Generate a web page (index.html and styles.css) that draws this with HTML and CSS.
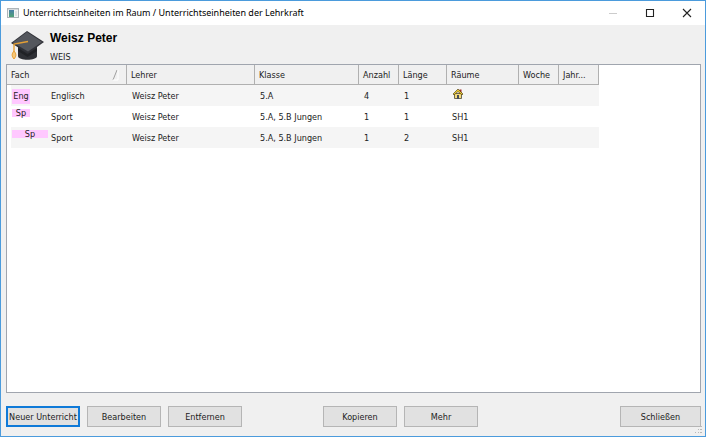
FILE: index.html
```html
<!DOCTYPE html>
<html lang="de">
<head>
<meta charset="utf-8">
<title>Unterrichtseinheiten</title>
<link rel="stylesheet" href="styles.css">
</head>
<body>
<div class="window">
  <header class="titlebar">
    <svg class="app-icon" width="12" height="12" viewBox="0 0 12 12" aria-hidden="true">
      <defs><linearGradient id="pane" x2="0" y2="1"><stop offset="0" stop-color="#4a7fa8"/><stop offset="1" stop-color="#4fa274"/></linearGradient></defs>
      <rect x=".5" y="1.5" width="11" height="9" fill="#f3f4f4" stroke="#aeb5b9"/>
      <path d="M1 2h10v1H1z" fill="#d5dadd"/>
      <rect x="2" y="3" width="5" height="7" fill="url(#pane)"/>
      <path d="M8 4h2v5H8z" fill="#dfe3e5"/>
    </svg>
    <span class="caption">Unterrichtseinheiten im Raum / Unterrichtseinheiten der Lehrkraft</span>
    <div class="controls">
      <button type="button" aria-label="Minimieren" disabled><svg width="10" height="10" viewBox="0 0 10 10"><path d="M1 5.5h8" stroke="#ccc"/></svg></button>
      <button type="button" aria-label="Maximieren"><svg width="10" height="10" viewBox="0 0 10 10"><path d="M1.5 1.500h7v7h-7z" fill="none" stroke="#222" stroke-width="1.1"/></svg></button>
      <button type="button" aria-label="Fenster schließen"><svg width="10" height="10" viewBox="0 0 10 10"><path d="M1 1l8 8M9 1l-8 8" fill="none" stroke="#222" stroke-width="1.1"/></svg></button>
    </div>
  </header>

  <section class="person">
    <svg width="36" height="32" viewBox="0 0 36 32" aria-hidden="true">
      <path d="M9 15v11c0 5 19 5 19 0V15z" fill="#2e3035"/>
      <path d="M9 18l9.500 6 9.500-6v3l-9.500 6L9 21z" fill="#202226"/>
      <path d="M18 1L35 12 19 23.500 2 13z" fill="#303238"/>
      <path d="M18 2L33 12 19 21.500 4 12.500z" fill="#54575d"/>
      <path d="M19 11.500L5 14v9" fill="none" stroke="#e5a035" stroke-width="1.400"/>
      <path d="M5 21c-2.500 3-2.500 5 0 8 2.500-3 2.500-5 0-8z" fill="#f6c879" stroke="#e7a03a"/>
    </svg>
    <div>
      <h1>Weisz Peter</h1>
      <p>WEIS</p>
    </div>
  </section>

  <main class="list">
    <table>
      <colgroup><col class="c-fach"><col class="c-lehrer"><col class="c-klasse"><col class="c-small"><col class="c-laenge"><col class="c-raum"><col class="c-small"><col class="c-small"></colgroup>
      <thead>
        <tr>
          <th><div class="sorted">Fach <svg width="7" height="12" viewBox="0 0 7 12" aria-hidden="true"><path d="M1 11L5 1" stroke="#a0a0a0"/><path d="M6 1v10H1" fill="none" stroke="#fff"/></svg></div></th>
          <th>Lehrer</th><th>Klasse</th><th>Anzahl</th><th>Länge</th><th>Räume</th><th>Woche</th><th>Jahr...</th>
        </tr>
      </thead>
      <tbody>
        <tr>
          <td><div class="subject"><span class="slot"><span class="tag tall">Eng</span></span>Englisch</div></td>
          <td>Weisz Peter</td><td>5.A</td><td>4</td><td>1</td>
          <td><svg class="house" width="12" height="12" viewBox="0 0 12 12" role="img" aria-label="Stammraum">
            <path d="M2.500 5.500h7v5h-7z" fill="#f4dc7c" stroke="#4a4636" stroke-width=".8"/>
            <path d="M7.500 1.500h2v4h-2z" fill="#a32822"/>
            <path d="M6 1L1 6l1 1 4-3.500L10 7l1-1z" fill="#edc92c" stroke="#3a3010" stroke-width=".6"/>
            <path d="M5 7h2v4H5z" fill="#464c58"/>
          </svg></td>
          <td></td><td></td>
        </tr>
        <tr>
          <td><div class="subject"><span class="slot top"><span class="tag">Sp</span></span>Sport</div></td>
          <td>Weisz Peter</td><td>5.A, 5.B Jungen</td><td>1</td><td>1</td><td>SH1</td><td></td><td></td>
        </tr>
        <tr>
          <td><div class="subject"><span class="slot top"><span class="tag wide">Sp</span></span>Sport</div></td>
          <td>Weisz Peter</td><td>5.A, 5.B Jungen</td><td>1</td><td>2</td><td>SH1</td><td></td><td></td>
        </tr>
      </tbody>
    </table>
  </main>

  <footer class="actions">
    <div class="group">
      <button type="button" class="default">Neuer Unterricht</button>
      <button type="button">Bearbeiten</button>
      <button type="button">Entfernen</button>
    </div>
    <div class="group">
      <button type="button">Kopieren</button>
      <button type="button">Mehr</button>
    </div>
    <button type="button" class="close">Schließen</button>
    <svg class="grip" width="8" height="8" viewBox="0 0 8 8" aria-hidden="true"><path d="M5 0h2v1H5zM3 3h1v1H3zM5 3h2v1H5zM0 6h1v1H0zM3 6h1v1H3zM5 6h2v1H5z" fill="#b8b8b8"/></svg>
  </footer>
</div>
</body>
</html>
```
FILE: styles.css
```css
* { box-sizing: border-box; }

body {
  margin: 0;
  font: 9px/12px "DejaVu Sans Condensed", "DejaVu Sans", sans-serif;
  color: #222;
}

button { font: inherit; color: inherit; }

.window {
  display: flex;
  flex-direction: column;
  min-height: 100vh;
  border: 1px solid #4b9bdc;
  background: #f0f0f0;
}

.titlebar {
  display: flex;
  align-items: center;
  gap: 4px;
  height: 24px;
  padding-left: 6px;
  background: #fff;
}

.caption {
  font: 9px/12px "Noto Sans", sans-serif;
  color: #000;
  white-space: nowrap;
}

.controls { display: flex; margin-left: auto; }

.controls button {
  display: grid;
  place-items: center;
  width: 37px;
  height: 24px;
  padding: 0;
  border: 0;
  background: none;
}

.person {
  display: flex;
  gap: 5px;
  height: 39px;
  padding: 5px 8px 0;
}

h1 {
  margin: 0;
  font: bold 12px/16px "Liberation Sans", sans-serif;
  color: #000;
}

p { margin: 5px 0 0; }

.list {
  flex: 1;
  margin: 0 4px 0 5px;
  border: 1px solid #a0a5ae;
  background: #fff;
}

table {
  table-layout: fixed;
  width: 592px;
  border-collapse: separate;
  border-spacing: 0;
}

.c-fach { width: 120px; }
.c-lehrer { width: 128px; }
.c-klasse { width: 104px; }
.c-small { width: 40px; }
.c-laenge { width: 48px; }
.c-raum { width: 72px; }

th {
  height: 20px;
  padding: 0 4px;
  border-right: 1px solid #b0b0b0;
  border-bottom: 1px solid #b0b0b0;
  background: #f0f0f0;
  font-weight: normal;
  text-align: left;
  white-space: nowrap;
}

.sorted {
  display: flex;
  justify-content: space-between;
  align-items: center;
  padding-right: 3px;
}

td {
  height: 21px;
  padding: 0 5px;
  white-space: nowrap;
}

td:first-child { padding: 0; border-left: 4px solid #fff; }
tbody tr:nth-child(odd) td { background-color: #f5f5f5; }

.subject { display: flex; align-items: center; height: 20px; }

.slot {
  display: flex;
  flex: none;
  width: 40px;
  padding-left: 1px;
}

.slot.top { align-self: flex-start; padding-top: 2px; }

.tag {
  width: 18px;
  height: 8px;
  background: #ffc8ff;
  line-height: 9px;
  text-align: center;
}

.tag.tall { height: 15px; margin-top: 2px; line-height: 15px; }
.tag.wide { width: 36px; }

.house { display: block; margin-bottom: 4px; }

.actions {
  display: flex;
  gap: 81px;
  position: relative;
  padding: 13px 4px 9px 5px;
}

.group { display: flex; gap: 7px; }

.actions button {
  width: 74px;
  height: 21px;
  padding: 0;
  border: 1px solid #b5b5b5;
  background: #e1e1e1;
  white-space: nowrap;
}

.actions .default { border: 2px solid #0f7ad8; }
.actions .close { width: 81px; margin-left: auto; }
.grip { position: absolute; right: 2px; bottom: 2px; }
```
